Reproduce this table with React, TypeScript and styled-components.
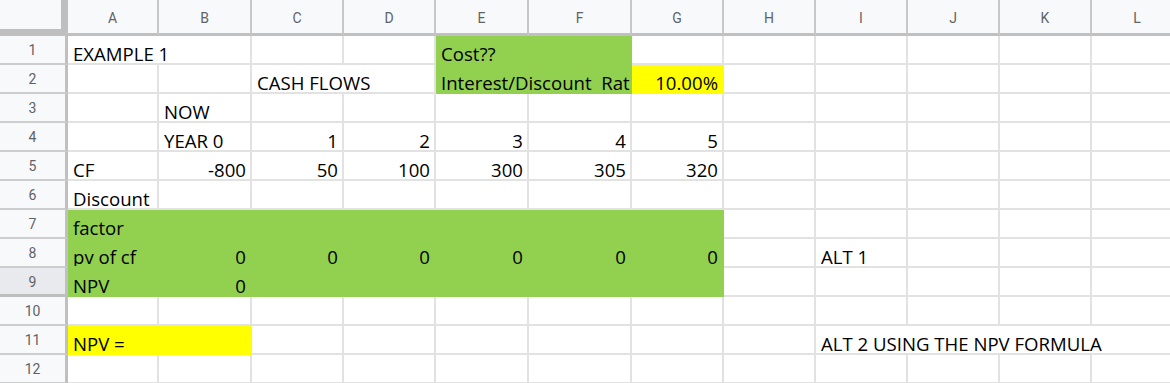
import styled, { createGlobalStyle } from "styled-components";

const GlobalStyle = createGlobalStyle`
  html, body {
    margin: 0;
    padding: 0;
    background: #ffffff;
    overflow: hidden;
  }
`;

type Fill = "green" | "yellow";

type CellDef = {
  col: number;
  span?: number;
  text?: string;
  align?: "left" | "right";
  fill?: Fill;
};

const COLUMNS = ["A", "B", "C", "D", "E", "F", "G", "H", "I", "J", "K", "L"];
const WIDTHS = [91, 93, 92, 92, 93, 103, 92, 92, 92, 92, 92, 92];

const FILLS: Record<Fill, string> = {
  green: "#92d050",
  yellow: "#ffff00",
};

const green = (col: number, text?: string, align?: "left" | "right"): CellDef => ({
  col,
  text,
  align,
  fill: "green",
});

const num = (col: number, text: string): CellDef => ({ col, text, align: "right" });

const ROWS: CellDef[][] = [
  [{ col: 0, span: 2, text: "EXAMPLE 1" }, green(4, "Cost??"), green(5)],
  [
    { col: 2, span: 2, text: "CASH FLOWS" },
    { col: 4, span: 2, text: "Interest/Discount  Rat", fill: "green" },
    { col: 6, text: "10.00%", align: "right", fill: "yellow" },
  ],
  [{ col: 1, text: "NOW" }],
  [
    { col: 1, text: "YEAR 0" },
    num(2, "1"),
    num(3, "2"),
    num(4, "3"),
    num(5, "4"),
    num(6, "5"),
  ],
  [
    { col: 0, text: "CF" },
    num(1, "-800"),
    num(2, "50"),
    num(3, "100"),
    num(4, "300"),
    num(5, "305"),
    num(6, "320"),
  ],
  [{ col: 0, text: "Discount" }],
  [green(0, "factor"), green(1), green(2), green(3), green(4), green(5), green(6)],
  [
    green(0, "pv of cf"),
    green(1, "0", "right"),
    green(2, "0", "right"),
    green(3, "0", "right"),
    green(4, "0", "right"),
    green(5, "0", "right"),
    green(6, "0", "right"),
    { col: 8, text: "ALT 1" },
  ],
  [green(0, "NPV"), green(1, "0", "right"), green(2), green(3), green(4), green(5), green(6)],
  [],
  [
    { col: 0, text: "NPV =", fill: "yellow" },
    { col: 1, fill: "yellow" },
    { col: 8, span: 4, text: "ALT 2 USING THE NPV FORMULA" },
  ],
  [],
];

const ACTIVE_ROW = 9;

const Sheet = styled.div`
  display: grid;
  grid-template-columns: 68px ${WIDTHS.map((w) => `${w}px`).join(" ")};
  grid-template-rows: 36px;
  grid-auto-rows: 29px;
  width: max-content;
`;

const Corner = styled.div`
  box-sizing: border-box;
  background: #f8f9fa;
  border-right: 7px solid #bfbfbf;
  border-bottom: 7px solid #bfbfbf;
`;

const ColumnHead = styled.div`
  box-sizing: border-box;
  display: flex;
  align-items: center;
  justify-content: center;
  background: #f8f9fa;
  border-right: 2px solid #c7c7c7;
  border-bottom: 3px solid #c0c0c0;
  color: #5f6368;
  font-family: Roboto, "Liberation Sans", sans-serif;
  font-size: 14px;
  padding-top: 2px;
`;

const RowHead = styled.div<{ $active?: boolean }>`
  box-sizing: border-box;
  display: flex;
  align-items: center;
  justify-content: center;
  background: ${(p) => (p.$active ? "#e8eaed" : "#f8f9fa")};
  border-right: 3px solid #c0c0c0;
  border-bottom: ${(p) => (p.$active ? "3px solid #bdbdbd" : "2px solid #cdcdcd")};
  color: #5f6368;
  font-family: Roboto, "Liberation Sans", sans-serif;
  font-size: 14px;
  padding-top: 1px;
`;

// text sits on the bottom of the cell, numbers hug the right edge
const Cell = styled.div<{ $span: number; $align: "left" | "right"; $fill?: Fill }>`
  box-sizing: border-box;
  grid-column: span ${(p) => p.$span};
  display: flex;
  align-items: flex-end;
  justify-content: ${(p) => (p.$align === "right" ? "flex-end" : "flex-start")};
  overflow: hidden;
  padding: 0 4px 1px 5px;
  background: ${(p) => (p.$fill ? FILLS[p.$fill] : "#ffffff")};
  border-right: 2px solid ${(p) => (p.$fill ? FILLS[p.$fill] : "#e2e2e2")};
  border-bottom: 2px solid ${(p) => (p.$fill ? FILLS[p.$fill] : "#e2e2e2")};
  color: #000000;
  font-family: "Open Sans", "Noto Sans", sans-serif;
  font-size: 18.6px;
  line-height: 17px;
  white-space: pre;
`;

function SheetRow({ index, cells }: { index: number; cells: CellDef[] }) {
  const out = [];
  let c = 0;
  while (c < COLUMNS.length) {
    const def = cells.find((d) => d.col === c);
    const span = def?.span ?? 1;
    out.push(
      <Cell key={c} $span={span} $align={def?.align ?? "left"} $fill={def?.fill}>
        {def?.text}
      </Cell>
    );
    c += span;
  }
  return (
    <>
      <RowHead $active={index + 1 === ACTIVE_ROW}>{index + 1}</RowHead>
      {out}
    </>
  );
}

export default function App() {
  return (
    <>
      <GlobalStyle />
      <Sheet>
        <Corner />
        {COLUMNS.map((name) => (
          <ColumnHead key={name}>{name}</ColumnHead>
        ))}
        {ROWS.map((cells, i) => (
          <SheetRow key={i} index={i} cells={cells} />
        ))}
      </Sheet>
    </>
  );
}
